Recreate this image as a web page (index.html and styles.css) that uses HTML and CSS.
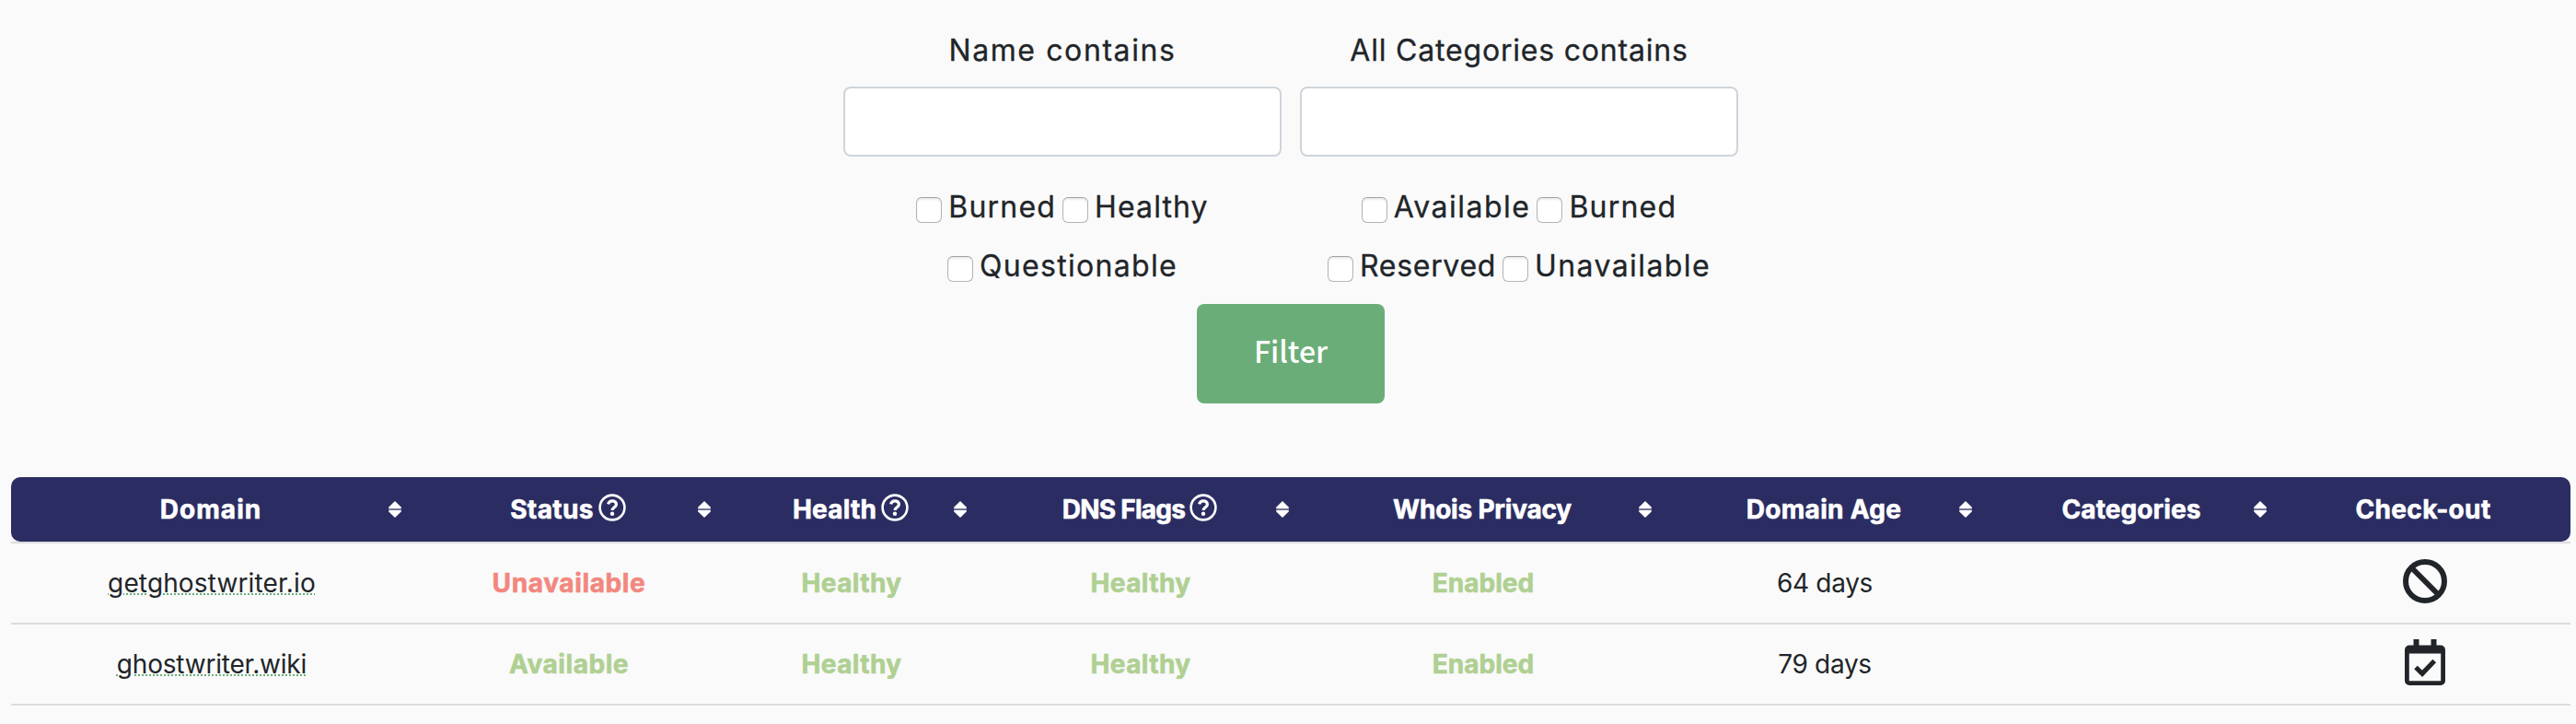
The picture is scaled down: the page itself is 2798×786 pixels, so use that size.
FILE: index.html
```
<!DOCTYPE html>
<html lang="en">
<head>
<meta charset="utf-8">
<title>Domains</title>
<link rel="stylesheet" href="styles.css">
</head>
<body>
<svg class="defs" width="0" height="0">
  <symbol id="sort" viewBox="0 0 15 18"><path d="M7.5 0 14.2 6.6Q15 7.8 13.5 8H1.5Q0 7.8.8 6.6Z"/><path d="M7.5 18 14.2 11.4Q15 10.2 13.5 10H1.5Q0 10.2.8 11.4Z"/><path d="M.5 8h14v2H.5z" opacity=".35"/></symbol>
  <symbol id="help" viewBox="0 0 30 30"><circle cx="15" cy="15" r="13.4" fill="none" stroke="currentColor" stroke-width="2.6"/><path d="M10.6 11.4C11.2 9 12.9 7.9 15.1 7.9c2.5 0 4.3 1.4 4.3 3.5 0 3.4-4.3 3.2-4.3 6.6" fill="none" stroke="currentColor" stroke-width="3.2"/><circle cx="15" cy="21.7" r="2.2"/></symbol>
</svg>
<form class="filter">
  <div class="fields">
    <div class="field">
      <label class="title name" for="name">Name contains</label>
      <input class="text" id="name" type="text">
      <div class="checks">
        <label class="check burned"><input type="checkbox"><span>Burned</span></label>
        <label class="check healthy"><input type="checkbox"><span>Healthy</span></label>
      </div>
      <div class="checks">
        <label class="check questionable"><input type="checkbox"><span>Questionable</span></label>
      </div>
    </div>
    <div class="field">
      <label class="title categories" for="cat">All Categories contains</label>
      <input class="text" id="cat" type="text">
      <div class="checks">
        <label class="check available"><input type="checkbox"><span>Available</span></label>
        <label class="check burned"><input type="checkbox"><span>Burned</span></label>
      </div>
      <div class="checks">
        <label class="check reserved"><input type="checkbox"><span>Reserved</span></label>
        <label class="check unavailable"><input type="checkbox"><span>Unavailable</span></label>
      </div>
    </div>
  </div>
  <button class="submit" type="button">Filter</button>
</form>
<table class="domains">
  <colgroup><col class="c1"><col class="c2"><col class="c3"><col class="c4"><col class="c5"><col class="c6"><col class="c7"><col class="c8"></colgroup>
  <thead>
    <tr>
      <th><div class="head h-domain"><span>Domain</span><svg class="sort"><use href="#sort"/></svg></div></th>
      <th><div class="head h-status wide"><span>Status</span><svg class="help"><use href="#help"/></svg><svg class="sort"><use href="#sort"/></svg></div></th>
      <th><div class="head h-health"><span>Health</span><svg class="help"><use href="#help"/></svg><svg class="sort"><use href="#sort"/></svg></div></th>
      <th><div class="head h-dns wide"><span>DNS Flags</span><svg class="help"><use href="#help"/></svg><svg class="sort"><use href="#sort"/></svg></div></th>
      <th><div class="head h-whois"><span>Whois Privacy</span><svg class="sort"><use href="#sort"/></svg></div></th>
      <th><div class="head h-age wide"><span>Domain Age</span><svg class="sort"><use href="#sort"/></svg></div></th>
      <th><div class="head h-cat"><span>Categories</span><svg class="sort"><use href="#sort"/></svg></div></th>
      <th><div class="head h-check"><span>Check-out</span></div></th>
    </tr>
  </thead>
  <tbody>
    <tr>
      <td><span class="domain long">getghostwriter.io</span></td>
      <td><span class="bad">Unavailable</span></td>
      <td><span class="good health">Healthy</span></td>
      <td><span class="good health">Healthy</span></td>
      <td><span class="good">Enabled</span></td>
      <td><span class="age">64 days</span></td>
      <td></td>
      <td><svg class="action" viewBox="0 0 48 48"><circle cx="24" cy="24" r="21" fill="none" stroke="currentColor" stroke-width="6"/><path d="M9.5 9.5l29 29" stroke="currentColor" stroke-width="6"/></svg></td>
    </tr>
    <tr>
      <td><span class="domain">ghostwriter.wiki</span></td>
      <td><span class="good avail">Available</span></td>
      <td><span class="good health">Healthy</span></td>
      <td><span class="good health">Healthy</span></td>
      <td><span class="good">Enabled</span></td>
      <td><span class="age">79 days</span></td>
      <td></td>
      <td><svg class="action calendar" viewBox="0 0 44 50"><path fill-rule="evenodd" d="M9.5 0h6v6.5h13V0h6v6.5H39a5 5 0 0 1 5 5V45a5 5 0 0 1-5 5H5a5 5 0 0 1-5-5V11.500a5 5 0 0 1 5-5h4.500zM4.800 15.500v29.700h34.400V15.500z"/><path d="M12 30.500l7 6.800L32.200 23.500" fill="none" stroke="currentColor" stroke-width="5.200"/></svg></td>
    </tr>
  </tbody>
</table>
</body>
</html>
```
FILE: styles.css
```
* { box-sizing: border-box; }
body {
  margin: 0;
  padding: 31px 6px 0 12px;
  background: #fafafa;
  color: #212529;
  font-family: Inter, "Liberation Sans", sans-serif;
}
.defs { display: block; }
svg { fill: currentColor; }

.filter { display: flex; flex-direction: column; align-items: center; }
.fields { display: flex; gap: 20px; }
.field { width: 476px; display: flex; flex-direction: column; align-items: center; }
.title { font-size: 32px; line-height: 48px; margin-bottom: 15px; white-space: nowrap; }
.title.name { letter-spacing: 1.6px; }
.title.categories { letter-spacing: .8px; }
.text {
  width: 100%;
  height: 76px;
  margin: 0 0 22px;
  border: 2px solid #ced4da;
  border-radius: 8px;
  background: #fff;
}
.checks { display: flex; gap: 7px; height: 64px; }
.check { display: flex; align-items: center; gap: 7px; font-size: 32px; white-space: nowrap; }
.check input {
  appearance: none;
  width: 28px;
  height: 28px;
  margin: 8px 0 0;
  border: 1px solid #b4b4b4;
  border-top-color: #a0a0a0;
  border-radius: 6px;
  background: #fff;
  box-shadow: inset 0 2px 2px #ececec;
}
.title, .check { -webkit-text-stroke: .3px currentColor; }
.check.burned { letter-spacing: 1.2px; }
.check.healthy { letter-spacing: 1.1px; }
.check.questionable { letter-spacing: 1.3px; }
.check.available { letter-spacing: 1.5px; }
.check.reserved { letter-spacing: .7px; }
.check.unavailable { letter-spacing: 1.4px; }
.submit {
  width: 204px;
  height: 108px;
  margin: 10px 0 80px;
  padding: 0 0 8px;
  border: 0;
  border-radius: 8px;
  background: #6bad79;
  color: #fff;
  font: 500 32px "Noto Sans CJK SC", "Noto Sans", sans-serif;
}

.domains {
  width: 2780px;
  table-layout: fixed;
  border-collapse: separate;
  border-spacing: 0;
  font-size: 28px;
  line-height: 40px;
  text-align: center;
  white-space: nowrap;
}
.c1 { width: 436px; }
.c2 { width: 340px; }
.c3 { width: 274px; }
.c4 { width: 354px; }
.c5 { width: 390px; }
.c6 { width: 352px; }
.c7 { width: 316px; }
.c8 { width: 318px; }
.domains th { height: 70px; padding: 0; background: #2b2d62; color: #fff; }
.domains th:first-child { border-radius: 10px 0 0 10px; }
.domains th:last-child { border-radius: 0 10px 10px 0; }
.head {
  position: relative;
  height: 70px;
  display: flex;
  align-items: center;
  justify-content: center;
  padding: 0 2px 1px 0;
}
.sort { position: absolute; right: 11px; top: 26px; width: 16px; height: 18px; }
.wide .sort { right: 15px; }
.help { width: 30px; height: 30px; margin: 0 0 3px 5px; }
.head span, .good, .bad { -webkit-text-stroke: .6px currentColor; }
.h-domain { letter-spacing: 1.05px; }
.h-status { letter-spacing: .4px; }
.h-health { letter-spacing: .2px; }
.h-dns { letter-spacing: -.75px; }
.h-whois { letter-spacing: -.2px; }
.h-age { letter-spacing: .3px; }
.h-cat { letter-spacing: .1px; }
.h-check { letter-spacing: .35px; }
.domains td { height: 88px; padding: 0 0 1px; border-top: 2px solid #dcdcdc; vertical-align: middle; }
.domains tr:last-child td { height: 90px; border-bottom: 2px solid #dcdcdc; }
.domain {
  letter-spacing: -.2px;
  text-decoration: underline dotted 2px #6bad79;
  text-underline-offset: 2px;
}
.domain.long { letter-spacing: .13px; }
.good, .bad { font-weight: 700; }
.good { color: #afd092; }
.bad { color: #f2877e; letter-spacing: .63px; }
.avail { letter-spacing: .56px; }
.health { letter-spacing: .4px; }
.age { letter-spacing: -.3px; }
.action { display: block; width: 48px; height: 48px; margin: 0 auto; position: relative; top: -1.5px; left: 1px; }
.calendar { width: 44px; height: 50px; }
```
